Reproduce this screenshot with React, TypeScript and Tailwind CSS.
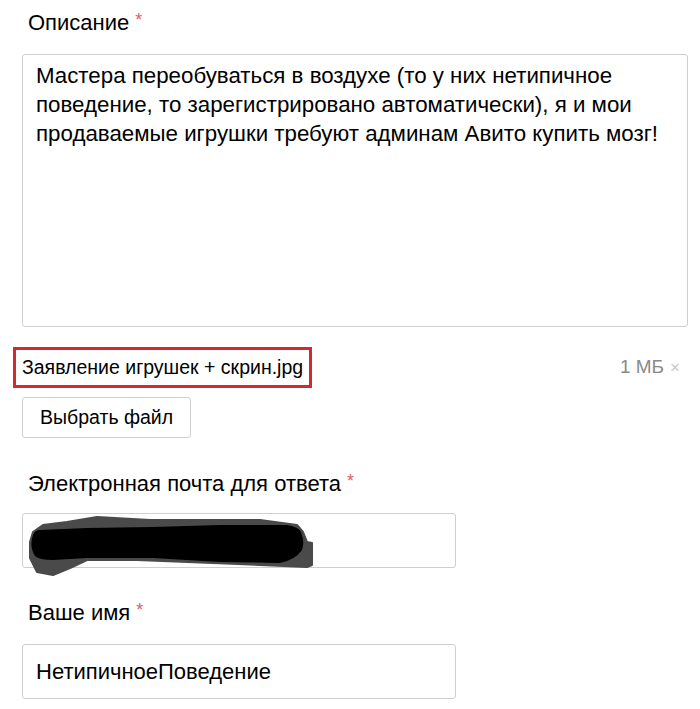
import React from 'react';

const font = { fontFamily: '"Liberation Sans", Arial, sans-serif' };

function Label({ text }: { text: string }) {
  return (
    <div className="text-[22px] leading-none text-black pl-[6px]">
      {text} <span className="text-[#e06060] text-[18px] relative -top-[4px]">*</span>
    </div>
  );
}

export default function App() {
  return (
    <div className="bg-white w-[700px] h-[709px] overflow-hidden" style={font}>
      <div className="pl-[22px] pr-[12px] pt-[12px]">
        {/* Описание */}
        <Label text="Описание" />
        <div className="mt-[20px] h-[273px] border border-[#cfcfcf] rounded-[3px] px-[13px] pt-[6px] text-[22.3px] leading-[29px] text-black">
          Мастера переобуваться в воздухе (то у них нетипичное поведение, то зарегистрировано автоматически), я и мои продаваемые игрушки требуют админам Авито купить мозг!
        </div>

        {/* прикреплённый файл */}
        <div className="mt-[20px] -ml-[9px] flex items-center justify-between">
          <div className="border-[3px] border-[#d42a2f] h-[41px] px-[6px] flex items-center text-[19.5px] text-black">
            Заявление игрушек + скрин.jpg
          </div>
          <div className="flex items-center gap-[6px] text-[19px] text-[#8a8a8a] pr-[8px]">
            <span>1 МБ</span>
            <span className="text-[#c8c8c8] text-[17px]">×</span>
          </div>
        </div>
        <button className="mt-[9px] h-[41px] px-[17px] border border-[#cfcfcf] rounded-[3px] bg-white text-[19.5px] text-black">
          Выбрать файл
        </button>

        {/* Email */}
        <div className="mt-[35px]">
          <Label text="Электронная почта для ответа" />
        </div>
        <div className="relative mt-[18px] w-[434px] h-[55px] border border-[#cfcfcf] rounded-[3px]">
          <svg className="absolute left-0 top-0" width="300" height="66" viewBox="0 0 300 66">
            <path
              d="M44 8 L74 3 L127 6 L237 6 L274 11 L280 18 L284 28 L289 29 L289 51 L284 53 L237 51 L190 49 L114 46 L64 46 L47 54 L30 61 L14 58 L7 44 L7 28 L10 18 L20 11 Z"
              fill="#4a4a4a"
              stroke="#4a4a4a"
              strokeWidth="2"
              strokeLinejoin="round"
            />
            <path
              d="M10 21 Q12 16 17 16 L64 14 L130 13 L197 11 L264 11 Q276 13 278 18 Q282 28 279 36 Q272 46 257 49 L197 48 L130 44 L64 44 L30 46 Q16 46 12 42 Q6 32 10 21 Z"
              fill="#000"
            />
          </svg>
        </div>

        {/* Name */}
        <div className="mt-[34px]">
          <Label text="Ваше имя" />
        </div>
        <div className="mt-[20px] w-[434px] h-[55px] border border-[#cfcfcf] rounded-[3px] px-[13px] flex items-center text-[22px] text-black">
          НетипичноеПоведение
        </div>
      </div>
    </div>
  );
}
